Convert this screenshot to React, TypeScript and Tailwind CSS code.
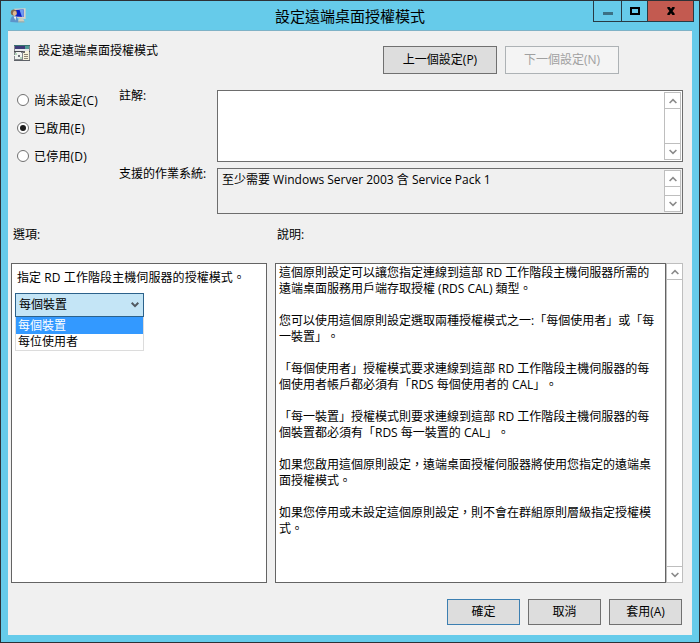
import type { ReactNode } from "react";
import clsx from "clsx";

const paragraphs = [
  ["這個原則設定可以讓您指定連線到這部 RD 工作階段主機伺服器所需的", "遠端桌面服務用戶端存取授權 (RDS CAL) 類型。"],
  ["您可以使用這個原則設定選取兩種授權模式之一:「每個使用者」或「每", "一裝置」。"],
  ["「每個使用者」授權模式要求連線到這部 RD 工作階段主機伺服器的每", "個使用者帳戶都必須有「RDS 每個使用者的 CAL」。"],
  ["「每一裝置」授權模式則要求連線到這部 RD 工作階段主機伺服器的每", "個裝置都必須有「RDS 每一裝置的 CAL」。"],
  ["如果您啟用這個原則設定，遠端桌面授權伺服器將使用您指定的遠端桌", "面授權模式。"],
  ["如果您停用或未設定這個原則設定，則不會在群組原則層級指定授權模", "式。"],
];

const states = [
  { label: "尚未設定(C)", checked: false },
  { label: "已啟用(E)", checked: true },
  { label: "已停用(D)", checked: false },
];

function Chevron({ up }: { up?: boolean }) {
  return (
    <svg width="8" height="6" viewBox="0 0 8 6" fill="none" stroke="#8a8a8a" strokeWidth="1.6">
      <path d={up ? "M0.6 5L4 1.6L7.4 5" : "M0.6 1L4 4.4L7.4 1"} />
    </svg>
  );
}

function Scrollbar({ className }: { className?: string }) {
  return (
    <div className={clsx("flex w-[17px] shrink-0 flex-col justify-between border border-[#bebebe] bg-white", className)}>
      <div className="flex h-4 items-center justify-center border-b border-[#bebebe]">
        <Chevron up />
      </div>
      <div className="flex h-4 items-center justify-center border-t border-[#bebebe]">
        <Chevron />
      </div>
    </div>
  );
}

function Button({ children, className }: { children: ReactNode; className?: string }) {
  return (
    <button className={clsx("flex items-center justify-center border text-[12px] leading-4", className)}>
      {children}
    </button>
  );
}

function UserMonitorIcon() {
  return (
    <svg width="17" height="16" viewBox="0 0 17 16">
      <path d="M4 0.8L15.6 0.3V11L4 9.8Z" fill="#d8d3c8" />
      <path d="M5 2L13.6 1.6V9L5 8.4Z" fill="#0c1fc4" />
      <path d="M9.5 1.8L13.6 1.6V9L12 8.9Z" fill="#6f9cf2" />
      <path d="M9 10.4H13L14.5 13.4H8Z" fill="#d3cdbd" />
      <path d="M8 13.4H14.5V14.4H8Z" fill="#a9a59a" />
      <circle cx="3.8" cy="4.6" r="3" fill="#84694f" />
      <ellipse cx="4.8" cy="5.4" rx="1.9" ry="2.3" fill="#e2b893" />
      <path d="M0.3 14C0.3 9.8 1.8 8 4 8C6.8 8 8.2 10 8.2 14.4Z" fill="#5c93c9" />
      <path d="M3.6 8.4L6.2 8.8L5.4 12.4Z" fill="#eef3f8" />
    </svg>
  );
}

function PolicyIcon() {
  return (
    <svg width="16" height="16" viewBox="0 0 16 16" shapeRendering="crispEdges">
      <rect width="16" height="16" fill="#84878c" />
      <rect width="16" height="1" fill="#37716f" />
      <rect x="1" y="1" width="10" height="3" fill="#3d3a78" />
      <rect x="11" y="1" width="4" height="3" fill="#4f9a95" />
      <rect x="1" y="4" width="14" height="2" fill="#e6e8ec" />
      <rect y="6" width="16" height="1" fill="#4b4d52" />
      <circle cx="4.5" cy="10.5" r="4" fill="#f1f3f1" />
      <path d="M1 8H3V10H1ZM6 12H8V14H6Z" fill="#b5d6bd" />
      <rect x="4" y="10" width="2" height="2" fill="#6f747c" />
      <rect x="9" y="6" width="6" height="9" fill="#f8f4dc" />
      <path d="M10 9.5H14M10 11.5H14M10 13.5H14" stroke="#8d8677" />
      <rect x="9" y="6" width="2" height="2" fill="#6b6b6b" />
      <rect y="15" width="16" height="1" fill="#5e6268" />
    </svg>
  );
}

function TitleBar() {
  return (
    <div className="flex h-[29px]">
      <div className="w-[100px] pt-[7px] pl-[9px]">
        <UserMonitorIcon />
      </div>
      <div className="flex-1 pt-[5px] pl-[174px] text-[15px] leading-5 whitespace-nowrap">設定遠端桌面授權模式</div>
      <div className="mr-[5px] flex h-[21px] w-[101px] border-x border-b border-[#283a44]">
        <div className="flex w-7 items-center justify-center border-r border-[#283a44]">
          <div className="mt-1 h-[3px] w-2.5 bg-[#3b7185]" />
        </div>
        <div className="flex w-[26px] items-center justify-center border-r border-[#283a44]">
          <div className="h-2 w-2.5 border-2 border-black" />
        </div>
        <div className="flex flex-1 items-center justify-center bg-[#c35a50]">
          <svg width="10" height="8" viewBox="0 0 10 8" stroke="#000" strokeWidth="2.6">
            <path d="M2 0L8 8M8 0L2 8" />
          </svg>
        </div>
      </div>
    </div>
  );
}

export default function App() {
  return (
    <div className="flex h-[643px] w-[700px] flex-col overflow-hidden border border-[#2d3136] bg-[#66cbea] font-['Open_Sans','Noto_Sans_CJK_TC',sans-serif] text-[12px] leading-4 text-black [text-spacing-trim:space-all]">
      <TitleBar />
      <div className="mx-[7px] h-[605px] border-t border-[#7fb2c6] bg-[#f0f0f0] pr-[9px] pl-[3px]">
        <div className="flex h-[59px] pl-[3px]">
          <div className="pt-3.5">
            <PolicyIcon />
          </div>
          <div className="w-[353px] pt-3 pl-[8px]">設定遠端桌面授權模式</div>
          <div className="flex gap-2 pt-[15px]">
            <Button className="h-7 w-[114px] border-[#707070] bg-[#dddddd]">上一個設定(P)</Button>
            <Button className="h-7 w-[114px] border-[#adb2b5] bg-[#f4f4f4] text-[#a0a0a0]">下一個設定(N)</Button>
          </div>
        </div>

        <div className="flex h-[137px]">
          <div className="flex w-[108px] flex-col gap-3 pt-0.5 pl-1.5">
            {states.map((s) => (
              <label key={s.label} className="flex h-4 items-center gap-[5px]">
                <span className="flex h-3 w-3 items-center justify-center rounded-full border border-[#707070] bg-white">
                  {s.checked && <span className="h-1.5 w-1.5 rounded-full bg-[#1c1c1c]" />}
                </span>
                <span className="pt-0.5 tracking-[0.2px]">{s.label}</span>
              </label>
            ))}
          </div>
          <div className="w-[98px]">
            <div className="-mt-0.5 h-[78px]">註解:</div>
            <div>支援的作業系統:</div>
          </div>
          <div className="flex flex-1 flex-col gap-1.5">
            <div className="flex h-[72px] justify-end border border-[#6d6d6d] bg-white p-px">
              <Scrollbar />
            </div>
            <div className="flex h-[46px] justify-between border border-[#6d6d6d] p-px">
              <div className="pt-0.5 pl-[3px]">至少需要 Windows Server 2003 含 Service Pack 1</div>
              <Scrollbar />
            </div>
          </div>
        </div>

        <div className="flex h-9 pl-0.5">
          <div className="w-[264px]">選項:</div>
          <div>說明:</div>
        </div>

        <div className="flex gap-2">
          <div className="h-80 w-64 border border-[#646464] bg-white pt-1.5 pl-[3px]">
            <div className="pl-[2px] tracking-[0.08px]">指定 RD 工作階段主機伺服器的授權模式。</div>
            <div className="mt-[7px] w-[129px]">
              <div className="flex h-6 items-center justify-between border border-[#2c628b] bg-[#c4e5f6] pr-1 pl-[3px]">
                每個裝置
                <svg width="8" height="6" viewBox="0 0 8 6" fill="none" stroke="#505860" strokeWidth="2">
                  <path d="M0.7 0.8L4 4.1L7.3 0.8" />
                </svg>
              </div>
              <div className="border-x border-b border-[#dcdcdc]">
                <div className="h-[17px] bg-[#3399ff] pt-px pl-0.5 text-white">每個裝置</div>
                <div className="h-4 pl-0.5">每位使用者</div>
              </div>
            </div>
          </div>
          <div className="flex">
            <div className="flex h-80 w-[391px] flex-col gap-4 border border-[#646464] bg-white pt-px pl-[3px] whitespace-nowrap">
              {paragraphs.map((lines) => (
                <div key={lines[0]}>
                  {lines.map((line) => (
                    <div key={line}>{line}</div>
                  ))}
                </div>
              ))}
            </div>
            <Scrollbar />
          </div>
        </div>

        <div className="flex justify-end gap-2 pt-4 pr-px">
          <Button className="h-[26px] w-[73px] border-[#3c7fb1] bg-[#dddddd]">確定</Button>
          <Button className="h-[26px] w-[73px] border-[#707070] bg-[#dddddd]">取消</Button>
          <Button className="h-[26px] w-[73px] border-[#707070] bg-[#dddddd]">套用(A)</Button>
        </div>
      </div>
    </div>
  );
}
